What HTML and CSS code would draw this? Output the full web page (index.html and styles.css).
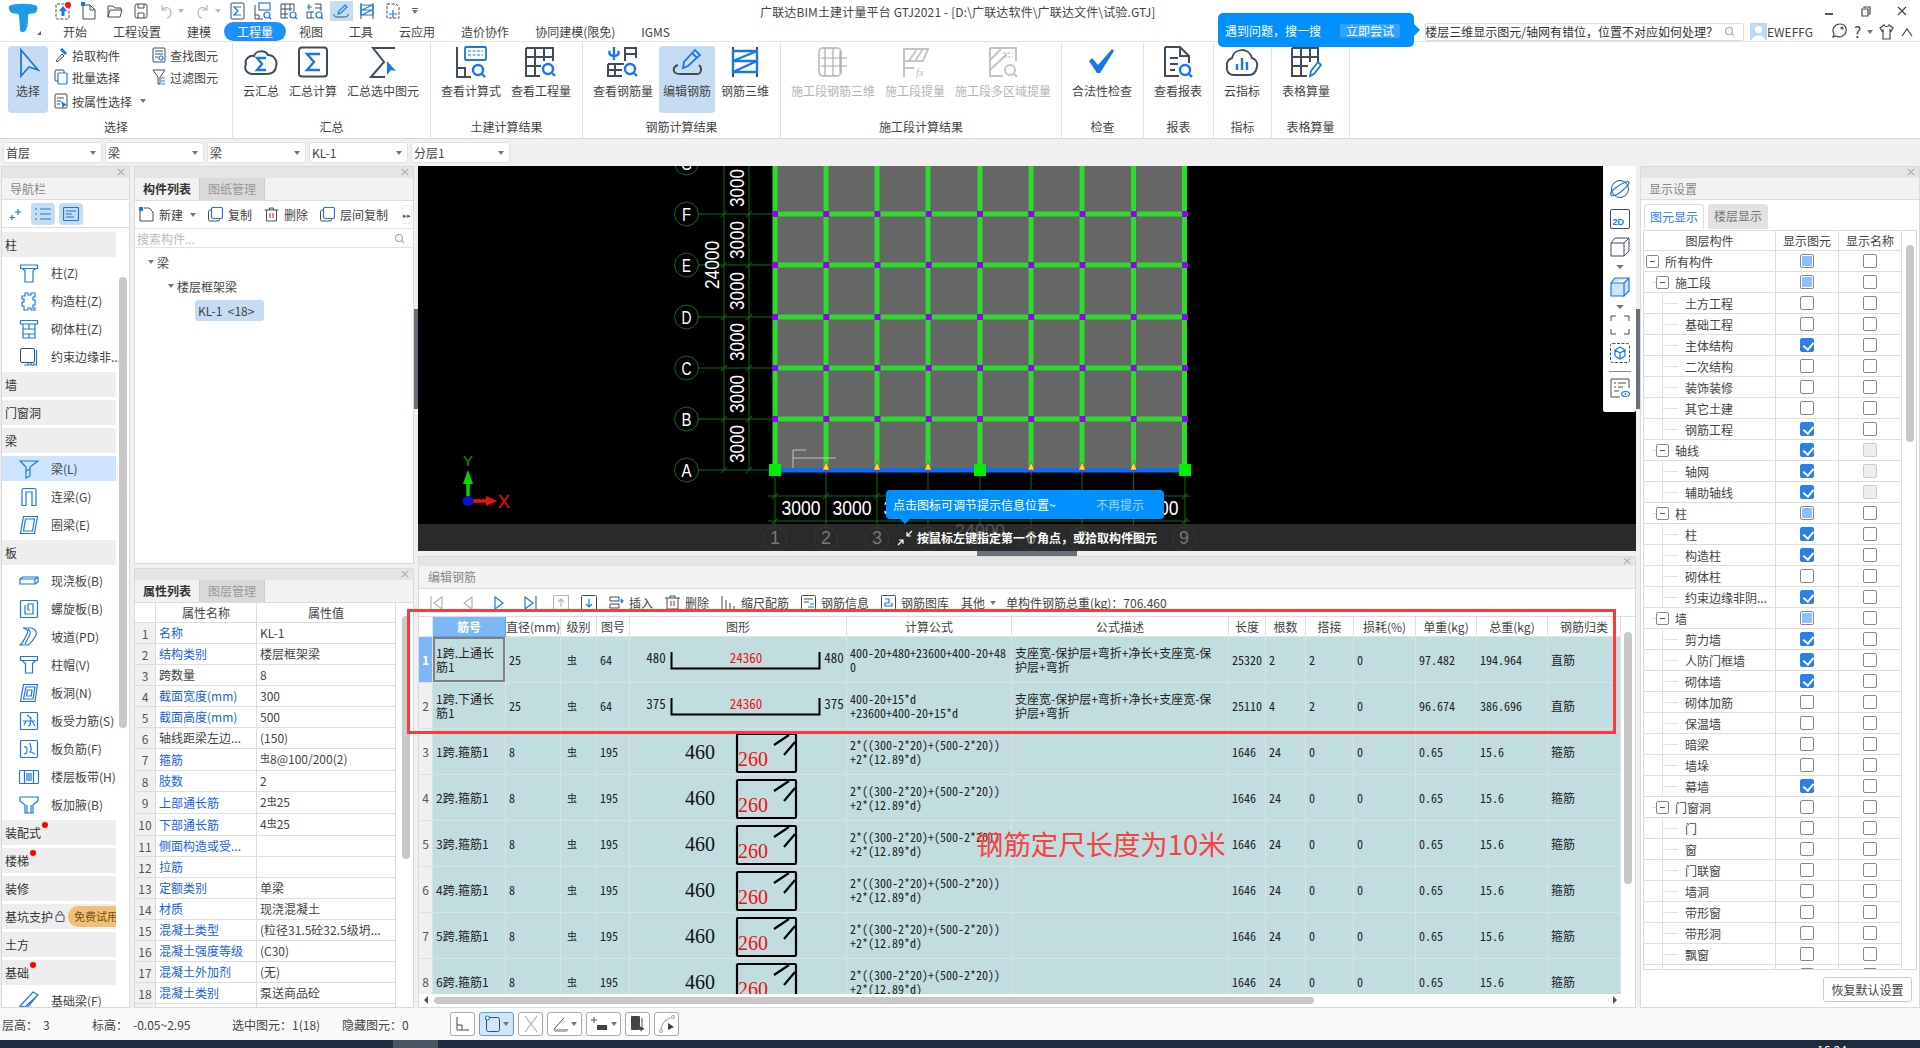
FILE: index.html
```html
<!DOCTYPE html>
<html lang="zh-CN">
<head>
<meta charset="utf-8">
<title>广联达BIM土建计量平台 GTJ2021</title>
<link rel="stylesheet" href="styles.css">
</head>
<body>
<svg class="defs" xmlns="http://www.w3.org/2000/svg">
  <symbol id="close" viewBox="0 0 10 10"><path d="M1 1l8 8M9 1l-8 8" class="sx"/></symbol>
  <symbol id="n1" viewBox="0 0 20 20"><path class="sb1" d="M1.5 2h17v3.5h-17zM3 5.5l3 2V19h8V7.5l3-2"/></symbol>
  <symbol id="n2" viewBox="0 0 20 20"><path class="sb1" d="M6 2h3v2h3V2h4v4h-2v3h2v5h-2v3h2v2h-4v-2H9v2H5v-4H3v-4h2V8H3V5h3z"/></symbol>
  <symbol id="n3" viewBox="0 0 20 20"><path class="sb1" d="M1.5 1.500h17v3.500h-17zM4 5h12v14H4zM4 10h12M4 15h12M10 5v5M10 15v4"/></symbol>
  <symbol id="n4" viewBox="0 0 20 20"><rect class="sd1" x="1.500" y="1.500" width="14" height="14" rx="1.500"/><path class="sb1" d="M17.500 3v15H5M15 18v-2M12 18v-2M9 18v-2"/></symbol>
  <symbol id="n5" viewBox="0 0 20 20"><path class="sb1" d="M1 2h18l-8 6v9l-4 2V8zM1 2l6 6M7 12l4-2"/></symbol>
  <symbol id="n6" viewBox="0 0 20 20"><path class="sb1" d="M3 18.500V3a1.500 1.500 0 0 1 1.500-1.500h11A1.500 1.500 0 0 1 17 3v15.500h-4V5H7v13.500z"/></symbol>
  <symbol id="n7" viewBox="0 0 20 20"><path class="sb1" d="M4.500 1.500h14l-3 17h-14zM6.500 4h9l-2 12h-9z"/></symbol>
  <symbol id="n8" viewBox="0 0 20 20"><path class="sb1" d="M1 8l3-2h15v5l-3 2H1zM1 8h15v5M16 8l3-2"/></symbol>
  <symbol id="n9" viewBox="0 0 20 20"><rect class="sb1" x="1.500" y="1.500" width="17" height="17" rx="1"/><path class="sb1" d="M6 6v9h8V5h-5v6h2"/></symbol>
  <symbol id="n10" viewBox="0 0 20 20"><path class="sb1" d="M4 1c5 1 6 3 3 8-2 4-3 7-6 9h8c3-2 6-6 8-10 1-3 0-5-4-7zM9 2c3 2 3 5 0 9l-3 6"/></symbol>
  <symbol id="n11" viewBox="0 0 20 20"><path class="sb1" d="M1.500 1.500h17v4h-17zM3 5.500l3.500 3V18h7V8.500l3.500-3"/></symbol>
  <symbol id="n12" viewBox="0 0 20 20"><path class="sb1" d="M4.500 1.500h14l-2.500 17H1.500zM7 4h9l-2 12H4.500zM8.500 7h4.500l-.7 6H7.500z"/></symbol>
  <symbol id="n13" viewBox="0 0 20 20"><rect class="sb1" x="1.500" y="1.500" width="17" height="17" rx="1"/><path class="sb1" d="M4 10h12M8 4l4 3-1 7-2 1M13 10l3 5M7 10l-2 4"/></symbol>
  <symbol id="n14" viewBox="0 0 20 20"><rect class="sb1" x="1.500" y="1.500" width="17" height="17" rx="1"/><path class="sb1" d="M5 8c2-1 3 1 3 3 0 3-1 4-3 4M11 4c0 3 3 6 0 9 2 0 3 1 5 2"/></symbol>
  <symbol id="n15" viewBox="0 0 20 20"><rect class="sb1" x=".5" y="3.500" width="19" height="13" rx="1"/><path class="sb1" d="M5.500 3.500v13M14.500 3.500v13M8 6v8M10 6v8M12 6v8"/></symbol>
  <symbol id="n16" viewBox="0 0 20 20"><path class="sb1" d="M1 2h18v4l-5 4v8H6v-8L1 6zM6 10L1 6M14 10l5-4M8 10v8M12 10v8"/></symbol>
  <symbol id="n17" viewBox="0 0 20 20"><path class="sb1" d="M14 1l5 3L6 19H1v-4zM1 15l5 1 13-12M6 16v3"/></symbol>
  <symbol id="ind" viewBox="0 0 15 15"><rect class="sd1" x=".5" y="3" width="11" height="11" rx="1.500"/><rect class="sb1 bgw" x="3.500" y=".5" width="11" height="11" rx="1.500"/></symbol>
  <symbol id="hoop" viewBox="0 0 216 45"><rect class="hoop" x="107" y="5" width="59" height="38" rx="1"/><path class="hoop" d="M144 16l15-10M154 26l11-13"/></symbol>
</svg>

<div class="app">
  <header class="head">
    <div class="logo">
      <svg width="32" height="32" viewBox="0 0 32 32"><path class="logo-t" d="M2 4C8 1 24 1 30 4c1 3 0 6-2 7-3 1-6 0-7 2 0 6 0 11-2 15-2 3-6 3-6-1l-1-14c-1-2-4-1-7-2C3 10 1 7 2 4z"/></svg>
      <i class="mini-tri"></i>
    </div>
    <div class="head-main">
      <div class="titlebar">
        <div class="qa">
          <span class="q"><svg width="16" height="18" viewBox="0 0 16 18"><rect class="sd1 dash" x="1" y="2" width="13" height="15" rx="1"/><path class="fb" d="M8 4l4 5H9.500v5h-3V9H4z"/><circle class="fr" cx="13" cy="3" r="3"/></svg></span>
          <span class="q"><svg width="16" height="18" viewBox="0 0 16 18"><path class="sd1" d="M2 3h7l5 5v9H2zM9 3v5h5"/><rect class="fb" x="0" y="0" width="4" height="4"/></svg></span>
          <span class="q"><svg width="16" height="18" viewBox="0 0 16 18"><path class="sd1" d="M1 15V4h5l2 2h6v2M1 15l2-7h12l-2 7z"/></svg></span>
          <span class="q"><svg width="16" height="18" viewBox="0 0 16 18"><rect class="sd1" x="2" y="2" width="12" height="14" rx="2"/><path class="sd1" d="M5 2v4h6V2M5 16v-5h6v5"/></svg></span>
          <span class="q undo"><svg width="14" height="16" viewBox="0 0 14 16"><path class="sg1" d="M3 2v5h5M3 7c3-4 9-3 9 3 0 3-2 5-4 5"/></svg><i class="caret lt"></i></span>
          <span class="q redo"><svg width="14" height="16" viewBox="0 0 14 16"><path class="sg1" d="M11 2v5H6M11 7C8 3 2 4 2 10c0 3 2 5 4 5"/></svg><i class="caret lt"></i></span>
          <span class="q"><svg width="15" height="18" viewBox="0 0 15 18"><rect class="sd1" x="1" y="1" width="13" height="16" rx="1"/><path class="sb1" d="M11 5H4l4 4-4 4h7"/></svg></span>
          <span class="q"><svg width="18" height="18" viewBox="0 0 18 18"><path class="sd1" d="M1 3v14h8M1 13h4v4"/><rect class="sb1" x="5" y="1" width="11" height="7"/><circle class="sb1" cx="13" cy="13" r="3"/><path class="sb1" d="M15 15l2 2"/></svg></span>
          <span class="q"><svg width="18" height="18" viewBox="0 0 18 18"><path class="sd1" d="M1 2h13v7M1 2v14h7M5 2v14M1 7h11M1 12h7M10 2v7"/><circle class="sb1" cx="13" cy="13" r="3"/><path class="sb1" d="M15 15l2 2"/></svg></span>
          <span class="q"><svg width="18" height="18" viewBox="0 0 18 18"><path class="sd1" d="M9 2h6v7M9 6h6M1 10h7M1 10v6h7M5 10v6"/><path class="sb1" d="M3 2v6M1 5h5"/><circle class="sb1" cx="13" cy="13" r="3"/><path class="sb1" d="M15 15l2 2"/></svg></span>
          <span class="q q-on"><svg width="16" height="16" viewBox="0 0 16 16"><path class="sd1" d="M1 11c0 3 1 3 7 3s7 0 7-3"/><path class="sb1" d="M5 11l1-3 6-6 2 2-6 6z"/></svg></span>
          <span class="q"><svg width="16" height="18" viewBox="0 0 16 18"><path class="sd1" d="M2 1v16M14 1v16"/><path class="sb1" d="M2 3h12v5H2zM2 8h12v5H2zM3 8l10-5M3 13l10-5"/></svg></span>
          <span class="q"><svg width="16" height="18" viewBox="0 0 16 18"><path class="sd1 dash" d="M2 2h9l3 3v11H2z"/><path class="sb1" d="M8 8v8M4 12h8"/></svg></span>
          <span class="q q-c"><i class="bar"></i><i class="caret"></i></span>
        </div>
        <div class="title">广联达BIM土建计量平台 GTJ2021 - [D:\广联达软件\广联达文件\试验.GTJ]</div>
        <div class="win">
          <i class="w-min"></i>
          <svg width="10" height="11" viewBox="0 0 10 11"><path class="sd2" d="M3 2V1h6v7H8M1 3h6v7H1z"/></svg>
          <svg width="10" height="10" viewBox="0 0 10 10"><path class="sd2" d="M1 1l8 8M9 1l-8 8"/></svg>
        </div>
      </div>
      <div class="tabrow">
        <nav class="tabs">
          <a class="tab">开始</a><a class="tab">工程设置</a><a class="tab">建模</a><a class="tab tab-on">工程量</a><a class="tab">视图</a><a class="tab">工具</a><a class="tab">云应用</a><a class="tab">造价协作</a><a class="tab">协同建模(限免)</a><a class="tab">IGMS</a>
        </nav>
        <div class="searchbox">
          <span class="q-wrap"><span class="q-text">楼层三维显示图元/轴网有错位，位置不对应如何处理？</span></span>
          <svg width="11" height="11" viewBox="0 0 11 11"><circle class="sg2" cx="5" cy="5" r="3.500"/><path class="sg2" d="M8 8l2 2"/></svg>
        </div>
        <div class="user">
          <svg width="17" height="17" viewBox="0 0 17 17"><rect class="av" width="17" height="17"/><circle class="fw" cx="8.500" cy="6.500" r="3.500"/><path class="fw" d="M2 17c0-6 13-6 13 0z"/></svg>
          <span>EWEFFG</span>
        </div>
        <div class="help">
          <svg width="17" height="17" viewBox="0 0 17 17"><path class="sd2" d="M2 14l1-3C0 6 4 1 9 1c5 0 7 4 6 8-1 4-6 6-10 4z"/><circle class="sd2" cx="11" cy="5" r="1"/></svg>
          <span class="qm">?</span><i class="caret"></i>
          <svg width="15" height="16" viewBox="0 0 15 16"><path class="sd2" d="M5 1L1 4l2 3 1-1v9h7V6l1 1 2-3-4-3c-1 2-4 2-5 0z"/></svg>
          <svg width="14" height="10" viewBox="0 0 14 10"><path class="sd2" d="M2 9l5-7 5 7"/></svg>
        </div>
      </div>
    </div>
  </header>

  <section class="ribbon">
    <div class="grp g1">
      <div class="grp-body">
        <button class="big big-sel on">
          <svg width="32" height="32" viewBox="0 0 32 32"><path class="sb2 fbl" d="M9 4l17 20-9-3-8 9z"/></svg>
          <span>选择</span>
        </button>
        <div class="col-small c1">
          <div class="sm"><svg width="14" height="16" viewBox="0 0 14 16"><path class="sd1" d="M2 14l6-7 2 2-7 6zM8 3l3 3"/><path class="fb" d="M8 1l5 5-2 2-5-5z"/></svg>拾取构件</div>
          <div class="sm"><svg width="14" height="16" viewBox="0 0 14 16"><rect class="sd1" x="1" y="1" width="9" height="11" rx="1"/><rect class="sb1 bgw" x="4" y="4" width="9" height="11" rx="1"/></svg>批量选择</div>
          <div class="sm"><svg width="14" height="16" viewBox="0 0 14 16"><rect class="sd1" x="1" y="1" width="12" height="14" rx="1"/><path class="sd1" d="M3 5h7M3 8h4M3 11h3"/><path class="fb" d="M7 8l6 4-3 1-1 3z"/></svg>按属性选择<i class="caret"></i></div>
        </div>
        <div class="col-small c2">
          <div class="sm"><svg width="14" height="16" viewBox="0 0 14 16"><rect class="sd1" x="1" y="1" width="12" height="14" rx="1"/><path class="sd1" d="M3 4h8M3 7h8M3 10h3"/><circle class="sb1" cx="9" cy="11" r="2"/></svg>查找图元</div>
          <div class="sm"><svg width="14" height="16" viewBox="0 0 14 16"><path class="sd1" d="M1 1h12L8 8v7H6V8z"/><path class="sb1" d="M9 9h4M9 12h4M9 15h4"/></svg>过滤图元</div>
        </div>
      </div>
      <div class="grp-name">选择</div>
    </div>
    <div class="grp g2">
      <div class="grp-body btns">
        <button class="big"><svg width="36" height="32" viewBox="0 0 36 32"><path class="sd3" d="M10 28C3 28 1 22 3 18c-2-5 4-9 8-8 2-6 11-6 14-1 6 0 10 6 8 12-1 5-5 7-9 7z"/><path class="sb3" d="M23 12h-9l5 6-5 6h9"/></svg><span>云汇总</span></button>
        <button class="big"><svg width="32" height="32" viewBox="0 0 32 32"><rect class="sd3" x="2" y="1.500" width="28" height="29" rx="3"/><path class="sb3" d="M23 8H10l7 8-7 8h13"/></svg><span>汇总计算</span></button>
        <button class="big"><svg width="32" height="32" viewBox="0 0 32 32"><path class="sd3" d="M28 2H6l11 14L4 31h14"/><path class="fb" d="M20 15l9 10-5-1-4 5z"/></svg><span>汇总选中图元</span></button>
      </div>
      <div class="grp-name">汇总</div>
    </div>
    <div class="grp g3">
      <div class="grp-body btns">
        <button class="big"><svg width="34" height="32" viewBox="0 0 34 32"><path class="sd3" d="M3 1v30h14M3 22h8v9"/><rect class="sb2 bgw" x="11" y="1" width="21" height="13" rx="1"/><path class="sb1 dash" d="M14 5h15M14 9h15"/><circle class="sb3" cx="24" cy="24" r="5"/><path class="sb3" d="M28 28l3 3"/></svg><span>查看计算式</span></button>
        <button class="big"><svg width="34" height="32" viewBox="0 0 34 32"><path class="sd3" d="M2 2h27v13M2 2v28h14M2 11h26M2 20h15M11 2v28M20 2v13"/><circle class="sb3" cx="24" cy="23" r="5"/><path class="sb3" d="M28 27l3 3"/></svg><span>查看工程量</span></button>
      </div>
      <div class="grp-name">土建计算结果</div>
    </div>
    <div class="grp g4">
      <div class="grp-body btns">
        <button class="big"><svg width="34" height="32" viewBox="0 0 34 32"><path class="sd3" d="M19 15V2h11v10M19 8h11M2 18h16M2 18v12h14M9 18v12M2 24h14"/><path class="sb3" d="M8 1v13M4 5c-2 3 1 5 4 5s6-2 4-5"/><circle class="sb3" cx="24" cy="23" r="5"/><path class="sb3" d="M28 27l3 3"/></svg><span>查看钢筋量</span></button>
        <button class="big big-on on"><svg width="32" height="32" viewBox="0 0 32 32"><path class="sd3" d="M7 19c-6 2-6 9 2 9h17c5 0 5-7 2-9"/><path class="sb2" d="M12 22l1-6L24 4l5 5-12 11zM21 7l5 5"/></svg><span>编辑钢筋</span></button>
        <button class="big"><svg width="32" height="32" viewBox="0 0 32 32"><path class="sd3" d="M4 1v30M28 1v30"/><path class="sb3" d="M4 5h24v10H4zM4 15h24v11H4zM4 15L28 5M4 26l24-11"/></svg><span>钢筋三维</span></button>
      </div>
      <div class="grp-name">钢筋计算结果</div>
    </div>
    <div class="grp g5">
      <div class="grp-body btns off">
        <button class="big"><svg width="32" height="32" viewBox="0 0 32 32"><rect class="sg3" x="2" y="2" width="22" height="28" rx="4"/><path class="sg2" d="M8 2v28M4 12h26M4 20h26M16 2v28M23 5v22"/></svg><span>施工段钢筋三维</span></button>
        <button class="big"><svg width="32" height="32" viewBox="0 0 32 32"><path class="sg3" d="M5 3h24l-5 12H5zM5 3v28M5 22h10M10 15l8-12M16 15l8-12"/><text class="fx" x="17" y="30">fx</text></svg><span>施工段提量</span></button>
        <button class="big"><svg width="32" height="32" viewBox="0 0 32 32"><path class="sg3" d="M3 2h26v13M3 2v28h13M3 14L14 3M3 24L20 8"/><path class="sg1 dash" d="M16 7h10M16 11h10"/><circle class="sg3" cx="23" cy="24" r="5"/><path class="sg3" d="M27 28l3 3"/></svg><span>施工段多区域提量</span></button>
      </div>
      <div class="grp-name">施工段计算结果</div>
    </div>
    <div class="grp g6">
      <div class="grp-body btns">
        <button class="big"><svg width="32" height="32" viewBox="0 0 32 32"><path class="fb" d="M3 15l3-3 6 7L26 3l2 2-14 22h-3z"/></svg><span>合法性检查</span></button>
      </div>
      <div class="grp-name">检查</div>
    </div>
    <div class="grp g7">
      <div class="grp-body btns">
        <button class="big"><svg width="32" height="32" viewBox="0 0 32 32"><path class="sd3" d="M3 1h15l9 9v7M18 1v9h9M3 1v29h14M8 12h8M8 18h8M8 24h5"/><circle class="sb3" cx="23" cy="24" r="5"/><path class="sb3" d="M27 28l3 3"/></svg><span>查看报表</span></button>
      </div>
      <div class="grp-name">报表</div>
    </div>
    <div class="grp g8">
      <div class="grp-body btns">
        <button class="big"><svg width="34" height="32" viewBox="0 0 34 32"><path class="sd3" d="M9 29C3 29 1 24 2 20c-1-4 2-7 5-8C9 2 24 1 27 12c4 1 6 5 5 9-1 5-4 8-8 8z"/><path class="sb3" d="M12 18v6M17 12v12M22 16v8"/></svg><span>云指标</span></button>
      </div>
      <div class="grp-name">指标</div>
    </div>
    <div class="grp g9">
      <div class="grp-body btns">
        <button class="big"><svg width="32" height="32" viewBox="0 0 32 32"><path class="sd3" d="M2 2h26v15M2 2v28h15M2 11h26M2 20h16M11 2v28M20 2v14"/><path class="sb2" d="M20 30l1-5 7-9 3 3-7 9z"/></svg><span>表格算量</span></button>
      </div>
      <div class="grp-name">表格算量</div>
    </div>
  </section>

  <div class="combos">
    <div class="combo">首层<i class="caret"></i></div>
    <div class="combo">梁<i class="caret"></i></div>
    <div class="combo">梁<i class="caret"></i></div>
    <div class="combo">KL-1<i class="caret"></i></div>
    <div class="combo">分层1<i class="caret"></i></div>
  </div>

  <main class="main">
    <aside class="panel nav">
      <div class="p-head"><svg class="p-x"><use href="#close"/></svg></div>
      <div class="p-title">导航栏</div>
      <div class="nav-tools">
        <svg class="spark" width="14" height="14" viewBox="0 0 14 14"><path class="sb1" d="M9 2v6M6 5h6M3 8v5M1 10.500h5"/></svg>
        <span class="nt on"><svg width="16" height="14" viewBox="0 0 16 14"><path class="sb1" d="M5 2h11M5 7h11M5 12h11M0 2h2M0 7h2M0 12h2"/></svg></span>
        <span class="nt on"><svg width="16" height="14" viewBox="0 0 16 14"><rect class="sb1" x=".5" y=".5" width="15" height="13" rx="1"/><path class="sb1" d="M3 4h10M3 7h6M3 10h8"/></svg></span>
      </div>
      <div class="nav-list">
        <div class="cat">柱</div>
        <div class="it"><svg><use href="#n1"/></svg>柱(Z)</div>
        <div class="it"><svg><use href="#n2"/></svg>构造柱(Z)</div>
        <div class="it"><svg><use href="#n3"/></svg>砌体柱(Z)</div>
        <div class="it"><svg><use href="#n4"/></svg>约束边缘非...</div>
        <div class="cat">墙</div>
        <div class="cat">门窗洞</div>
        <div class="cat">梁</div>
        <div class="it it-on"><svg><use href="#n5"/></svg>梁(L)</div>
        <div class="it"><svg><use href="#n6"/></svg>连梁(G)</div>
        <div class="it"><svg><use href="#n7"/></svg>圈梁(E)</div>
        <div class="cat">板</div>
        <div class="it"><svg><use href="#n8"/></svg>现浇板(B)</div>
        <div class="it"><svg><use href="#n9"/></svg>螺旋板(B)</div>
        <div class="it"><svg><use href="#n10"/></svg>坡道(PD)</div>
        <div class="it"><svg><use href="#n11"/></svg>柱帽(V)</div>
        <div class="it"><svg><use href="#n12"/></svg>板洞(N)</div>
        <div class="it"><svg><use href="#n13"/></svg>板受力筋(S)</div>
        <div class="it"><svg><use href="#n14"/></svg>板负筋(F)</div>
        <div class="it"><svg><use href="#n15"/></svg>楼层板带(H)</div>
        <div class="it"><svg><use href="#n16"/></svg>板加腋(B)</div>
        <div class="cat">装配式<i class="dot"></i></div>
        <div class="cat">楼梯<i class="dot"></i></div>
        <div class="cat">装修</div>
        <div class="cat cat-try">基坑支护<svg width="10" height="11" viewBox="0 0 10 11"><rect class="sd1" x="1" y="4" width="8" height="6.500" rx="1"/><path class="sd1" d="M3 4V2.500a2 2 0 0 1 4 0V4"/></svg><span class="free">免费试用</span></div>
        <div class="cat">土方</div>
        <div class="cat">基础<i class="dot"></i></div>
        <div class="it"><svg><use href="#n17"/></svg>基础梁(F)</div>
      </div>
      <i class="v-scroll nav-scroll"></i>
    </aside>

    <div class="col-mid">
      <section class="panel comp">
        <div class="p-head"><svg class="p-x"><use href="#close"/></svg></div>
        <div class="p-tabs"><span class="pt pt-on">构件列表</span><span class="pt">图纸管理</span></div>
        <div class="comp-tools">
          <span class="ct"><svg width="15" height="15" viewBox="0 0 15 15"><path class="sd1" d="M1 4v10h13V5l-4-4H5"/><rect class="fb" width="4" height="4"/></svg>新建<i class="caret"></i></span>
          <span class="ct"><svg><use href="#ind"/></svg>复制</span>
          <span class="ct"><svg width="14" height="15" viewBox="0 0 14 15"><path class="sd1" d="M0 3h14M2 3v11h10V3M5 3V1h4v2"/><path class="sr" d="M5.500 6v5M8.500 6v5"/></svg>删除</span>
          <span class="ct"><svg><use href="#ind"/></svg>层间复制</span>
          <span class="more">▸▸</span>
        </div>
        <div class="comp-search"><span>搜索构件...</span><svg width="11" height="11" viewBox="0 0 11 11"><circle class="sg2" cx="5" cy="5" r="3.500"/><path class="sg2" d="M8 8l2 2"/></svg></div>
        <div class="tree">
          <div class="tr t1"><i class="tri"></i>梁</div>
          <div class="tr t2"><i class="tri"></i>楼层框架梁</div>
          <div class="tr t3"><span class="leaf">KL-1 &nbsp;&lt;18&gt;</span></div>
        </div>
      </section>
      <section class="panel props">
        <div class="p-head"><svg class="p-x"><use href="#close"/></svg></div>
        <div class="p-tabs"><span class="pt pt-on">属性列表</span><span class="pt">图层管理</span></div>
        <div class="prop-body">
          <table class="ptable">
            <colgroup><col class="pc1"><col class="pc2"><col class="pc3"></colgroup>
            <thead><tr><th></th><th>属性名称</th><th>属性值</th></tr></thead>
            <tbody>
              <tr><th>1</th><td class="lnk">名称</td><td>KL-1</td></tr>
              <tr><th>2</th><td class="lnk">结构类别</td><td>楼层框架梁</td></tr>
              <tr><th>3</th><td>跨数量</td><td>8</td></tr>
              <tr><th>4</th><td class="lnk">截面宽度(mm)</td><td>300</td></tr>
              <tr><th>5</th><td class="lnk">截面高度(mm)</td><td>500</td></tr>
              <tr><th>6</th><td>轴线距梁左边...</td><td>(150)</td></tr>
              <tr><th>7</th><td class="lnk">箍筋</td><td><b class="rb">虫</b>8@100/200(2)</td></tr>
              <tr><th>8</th><td class="lnk">肢数</td><td>2</td></tr>
              <tr><th>9</th><td class="lnk">上部通长筋</td><td>2<b class="rb">虫</b>25</td></tr>
              <tr><th>10</th><td class="lnk">下部通长筋</td><td>4<b class="rb">虫</b>25</td></tr>
              <tr><th>11</th><td class="lnk">侧面构造或受...</td><td></td></tr>
              <tr><th>12</th><td class="lnk">拉筋</td><td></td></tr>
              <tr><th>13</th><td class="lnk">定额类别</td><td>单梁</td></tr>
              <tr><th>14</th><td class="lnk">材质</td><td>现浇混凝土</td></tr>
              <tr><th>15</th><td class="lnk">混凝土类型</td><td>(粒径31.5砼32.5级坍...</td></tr>
              <tr><th>16</th><td class="lnk">混凝土强度等级</td><td>(C30)</td></tr>
              <tr><th>17</th><td class="lnk">混凝土外加剂</td><td>(无)</td></tr>
              <tr><th>18</th><td class="lnk">混凝土类别</td><td>泵送商品砼</td></tr>
              <tr><th>19</th><td class="lnk">泵送类型</td><td>(混凝土泵)</td></tr>
            </tbody>
          </table>
          <i class="v-scroll prop-scroll"></i>
        </div>
      </section>
    </div>

    <div class="gutter"><i class="handle-v"></i></div>

    <div class="col-view">
      <section class="canvas">
        <svg class="cad" width="1218" height="385" viewBox="418 166 1218 385">
          <defs>
            <polygon id="bub" points="12,0 10.400,6 6,10.400 0,12 -6,10.400 -10.400,6 -12,0 -10.400,-6 -6,-10.400 0,-12 6,-10.400 10.400,-6"/>
          </defs>
          <rect class="c-fill" x="775" y="166" width="410" height="304"/>
          <g class="c-dim">
            <path d="M698 214H775M698 265H775M698 317H775M698 368H775M698 419H775M698 470H775M724 166V470M749 166V470"/>
            <path d="M775 470V546M826 470V546M877 470V546M928 470V546M980 470V546M1031 470V546M1082 470V546M1133.500 470V546M1185 470V546M768 496H1190M768 521H1190"/>
            <path d="M721 217l6-6M746 217l6-6M721 268l6-6M746 268l6-6M721 320l6-6M746 320l6-6M721 371l6-6M746 371l6-6M721 422l6-6M746 422l6-6M721 473l6-6M746 473l6-6M772 499l6-6M823 499l6-6M874 499l6-6M1182 499l6-6M772 524l6-6M1182 524l6-6"/>
            <use href="#bub" x="686.500" y="163"/><use href="#bub" x="686.500" y="214"/><use href="#bub" x="686.500" y="265"/><use href="#bub" x="686.500" y="317"/><use href="#bub" x="686.500" y="368"/><use href="#bub" x="686.500" y="419"/><use href="#bub" x="686.500" y="470"/>
          </g>
          <g class="c-beam">
            <path d="M775 166V470M826 166V470M877 166V470M928 166V470M980 166V470M1031 166V470M1082 166V470M1133.500 166V470M1184.500 166V470"/>
            <path d="M775 214H1185M775 265H1185M775 317H1185M775 368H1185M775 419H1185"/>
          </g>
          <g class="c-node">
            <path d="M772 214H1190M772 265H1190M772 317H1190M772 368H1190M772 419H1190"/>
          </g>
          <rect class="c-sel" x="775" y="468" width="410" height="4.500"/>
          <path class="c-node2" d="M826 472.500v2M877 472.500v2M928 472.500v2M1031 472.500v2M1082 472.500v2M1133.500 472.500v2"/>
          <path class="c-tri" d="M826 462l3.500 8h-7zM877 462l3.500 8h-7zM928 462l3.500 8h-7zM1031 462l3.500 8h-7zM1082 462l3.500 8h-7zM1133.500 462l3.500 8h-7z"/>
          <rect class="c-grip" x="769" y="464" width="12" height="12"/><rect class="c-grip" x="974" y="464" width="12" height="12"/><rect class="c-grip" x="1179" y="464" width="12" height="12"/>
          <path class="c-tick" d="M793 450V468M793 450H806M793 458H836"/>
          <g class="c-txt c-ax">
            <text x="686.500" y="170" textLength="11" lengthAdjust="spacingAndGlyphs">G</text><text x="686.500" y="221" textLength="9" lengthAdjust="spacingAndGlyphs">F</text><text x="686.500" y="272" textLength="9" lengthAdjust="spacingAndGlyphs">E</text><text x="686.500" y="324" textLength="10" lengthAdjust="spacingAndGlyphs">D</text><text x="686.500" y="375" textLength="10" lengthAdjust="spacingAndGlyphs">C</text><text x="686.500" y="426" textLength="10" lengthAdjust="spacingAndGlyphs">B</text><text x="686.500" y="477" textLength="10" lengthAdjust="spacingAndGlyphs">A</text>
          </g>
          <g class="c-txt">
            <text class="dim" transform="translate(744,188) rotate(-90)" textLength="38" lengthAdjust="spacingAndGlyphs">3000</text>
            <text class="dim" transform="translate(744,240) rotate(-90)" textLength="38" lengthAdjust="spacingAndGlyphs">3000</text>
            <text class="dim" transform="translate(744,291) rotate(-90)" textLength="38" lengthAdjust="spacingAndGlyphs">3000</text>
            <text class="dim" transform="translate(744,342) rotate(-90)" textLength="38" lengthAdjust="spacingAndGlyphs">3000</text>
            <text class="dim" transform="translate(744,394) rotate(-90)" textLength="38" lengthAdjust="spacingAndGlyphs">3000</text>
            <text class="dim" transform="translate(744,444) rotate(-90)" textLength="38" lengthAdjust="spacingAndGlyphs">3000</text>
            <text class="dim" transform="translate(719,265) rotate(-90)" textLength="48" lengthAdjust="spacingAndGlyphs">24000</text>
            <text class="dim" x="801" y="515" textLength="39" lengthAdjust="spacingAndGlyphs">3000</text>
            <text class="dim" x="852" y="515" textLength="39" lengthAdjust="spacingAndGlyphs">3000</text>
            <text class="dim" x="903" y="515" textLength="39" lengthAdjust="spacingAndGlyphs">3000</text>
            <text class="dim" x="1159" y="515" textLength="39" lengthAdjust="spacingAndGlyphs">3000</text>
          </g>
          <g class="c-xyz">
            <path class="y-ax" d="M468 498V484"/><path class="y-tip" d="M468 470l5 14h-10z"/>
            <path class="x-ax" d="M472 501h14"/><path class="x-tip" d="M497 501l-11 5v-10z"/>
            <ellipse class="o-dot" cx="468" cy="501" rx="5.500" ry="5"/>
            <text class="t-y" x="468" y="466">Y</text><text class="t-x" x="504" y="508">X</text>
          </g>
          <g class="c-under">
            <use href="#bub" x="775" y="539"/><use href="#bub" x="826" y="539"/><use href="#bub" x="877" y="539"/><use href="#bub" x="928" y="539"/><use href="#bub" x="980" y="539"/><use href="#bub" x="1031" y="539"/><use href="#bub" x="1082" y="539"/><use href="#bub" x="1133.500" y="539"/><use href="#bub" x="1184.500" y="539"/>
          </g>
        </svg>
        <div class="band">
          <div class="band-nums"><span>1</span><span>2</span><span>3</span><span>4</span><span>5</span><span>6</span><span>7</span><span>8</span><span>9</span><span class="band-sum">24000</span></div>
          <svg class="band-ic" width="16" height="16" viewBox="0 0 16 16"><path class="sw" d="M15 1L10 6M10 2v4h4M1 15l5-5M6 14v-4H2"/></svg>
          <span class="band-text">按鼠标左键指定第一个角点，或拾取构件图元</span>
        </div>
        <div class="tip">
          <span>点击图标可调节提示信息位置~</span><span class="tip-no">不再提示</span>
        </div>
        <div class="floatbar">
          <svg width="22" height="22" viewBox="0 0 22 22"><circle class="sd1" cx="11" cy="11" r="8.500"/><path class="sb1" d="M2 17c-3-4 15-15 18-13 2 2-14 17-18 13z"/></svg>
          <svg width="20" height="20" viewBox="0 0 20 20"><rect class="sd1" x=".5" y=".5" width="19" height="19" rx="1.500"/><text class="t2d" x="2.500" y="16">2D</text></svg>
          <svg width="20" height="20" viewBox="0 0 20 20"><path class="sd1" d="M1 6h13v13H1zM1 6l4-5h14v13l-5 5M14 6l5-5"/></svg>
          <i class="caret"></i>
          <svg width="20" height="20" viewBox="0 0 20 20"><path class="sb1 fc" d="M1 6h13v13H1zM1 6l4-5h14v13l-5 5V6l5-5"/></svg>
          <i class="caret"></i>
          <svg width="20" height="20" viewBox="0 0 20 20"><path class="sd1" d="M1 6V1h5M14 1h5v5M19 14v5h-5M6 19H1v-5"/></svg>
          <svg width="20" height="20" viewBox="0 0 20 20"><rect class="sd1 dash" x=".5" y=".5" width="19" height="19" rx="2"/><path class="sb1" d="M10 4l5 3v6l-5 3-5-3V7zM5 7l5 3 5-3M10 10v6"/></svg>
          <i class="fb-sep"></i>
          <svg width="20" height="20" viewBox="0 0 20 20"><path class="sd1" d="M19 10V1H1v18h9M4 5h2M8 5h8M4 9h2M8 9h5M4 13h5"/><ellipse class="sb1" cx="15.500" cy="16" rx="4" ry="2.500"/><circle class="fb" cx="15.500" cy="16" r="1"/></svg>
        </div>
      </section>
      <div class="gutter-h"><i class="handle-h"></i></div>
      <section class="panel edit">
        <div class="p-head"><svg class="p-x"><use href="#close"/></svg></div>
        <div class="p-title edit-title">编辑钢筋</div>
        <div class="tools">
          <svg class="nv" viewBox="0 0 20 16"><path class="sg1" d="M6 1v14M17 2l-8 6 8 6z"/></svg>
          <svg class="nv" viewBox="0 0 20 16"><path class="sg1" d="M15 2L7 8l8 6z"/></svg>
          <svg class="nv" viewBox="0 0 20 16"><path class="sb1" d="M6 2l8 6-8 6z"/></svg>
          <svg class="nv" viewBox="0 0 20 16"><path class="sb1" d="M4 2l8 6-8 6zM15 1v14"/></svg>
          <svg class="nv2" viewBox="0 0 16 16"><rect class="sg1" x=".5" y=".5" width="15" height="15" rx="1"/><path class="sg1" d="M8 12V4M5 7l3-3 3 3"/></svg>
          <svg class="nv2" viewBox="0 0 16 16"><rect class="sd1" x=".5" y=".5" width="15" height="15" rx="1"/><path class="sb1" d="M8 4v8M5 9l3 3 3-3"/></svg>
          <span class="ti"><svg width="15" height="15" viewBox="0 0 15 15"><path class="sd1" d="M1 2h9v4H1zM1 9h9v4H1z"/><path class="sb1" d="M11 6h3M12 4l2 2-2 2"/></svg>插入</span>
          <span class="ti"><svg width="15" height="15" viewBox="0 0 15 15"><path class="sd1" d="M0 3h15M2 3v11h11V3M5 3V1h5v2"/><path class="sr" d="M6 6v5M9 6v5"/></svg>删除</span>
          <span class="ti"><svg width="15" height="15" viewBox="0 0 15 15"><path class="sd1" d="M1 1v13M5 5v9M9 8v6M13 11v3"/></svg>缩尺配筋</span>
          <span class="ti"><svg width="15" height="15" viewBox="0 0 15 15"><rect class="sd1" x=".5" y=".5" width="14" height="14" rx="1"/><path class="sd1" d="M3 4h9M3 7h5"/><path class="sb1" d="M9 9h4M7 12h6"/></svg>钢筋信息</span>
          <span class="ti"><svg width="15" height="15" viewBox="0 0 15 15"><rect class="sd1" x=".5" y=".5" width="14" height="14" rx="1"/><path class="sb1" d="M4 4h4v4H4M4 8v3h7V8"/></svg>钢筋图库</span>
          <span class="ti ti-o">其他<i class="caret"></i></span>
          <span class="ti-total">单构件钢筋总重(kg)：706.460</span>
        </div>
        <div class="grid-wrap">
          <table class="rtable">
            <colgroup><col class="r0"><col class="r1"><col class="r2"><col class="r3"><col class="r4"><col class="r5"><col class="r6"><col class="r7"><col class="r8"><col class="r9"><col class="r10"><col class="r11"><col class="r12"><col class="r13"><col class="r14"></colgroup>
            <thead><tr><th></th><th class="hsel">筋号</th><th>直径(mm)</th><th>级别</th><th>图号</th><th>图形</th><th>计算公式</th><th>公式描述</th><th>长度</th><th>根数</th><th>搭接</th><th>损耗(%)</th><th>单重(kg)</th><th>总重(kg)</th><th>钢筋归类</th></tr></thead>
            <tbody>
              <tr><th class="rsel">1</th><td class="cell-sel">1跨.上通长<br>筋1</td><td class="m">25</td><td class="ctr"><b class="rb2">虫</b></td><td class="m">64</td>
                <td class="sh"><svg class="shape" viewBox="0 0 216 45"><text class="tm" x="26" y="26">480</text><path class="bar-s" d="M41.500 15V31.500H189.500V15"/><text class="tr-m" x="116" y="26">24360</text><text class="tm" x="204" y="26">480</text></svg></td>
                <td class="m">400-20+480+23600+400-20+48<br>0</td><td class="cn">支座宽-保护层+弯折+净长+支座宽-保<br>护层+弯折</td><td class="m">25320</td><td class="m">2</td><td class="m">2</td><td class="m">0</td><td class="m">97.482</td><td class="m">194.964</td><td class="cn">直筋</td></tr>
              <tr><th>2</th><td>1跨.下通长<br>筋1</td><td class="m">25</td><td class="ctr"><b class="rb2">虫</b></td><td class="m">64</td>
                <td class="sh"><svg class="shape" viewBox="0 0 216 45"><text class="tm" x="26" y="26">375</text><path class="bar-s" d="M41.500 15V31.500H189.500V15"/><text class="tr-m" x="116" y="26">24360</text><text class="tm" x="204" y="26">375</text></svg></td>
                <td class="m">400-20+15*d<br>+23600+400-20+15*d</td><td class="cn">支座宽-保护层+弯折+净长+支座宽-保<br>护层+弯折</td><td class="m">25110</td><td class="m">4</td><td class="m">2</td><td class="m">0</td><td class="m">96.674</td><td class="m">386.696</td><td class="cn">直筋</td></tr>
              <tr><th>3</th><td>1跨.箍筋1</td><td class="m">8</td><td class="ctr"><b class="rb2">虫</b></td><td class="m">195</td>
                <td class="sh"><svg class="shape" viewBox="0 0 216 45"><text class="t460" x="70" y="30">460</text><use href="#hoop"/><text class="t260" x="108" y="37">260</text></svg></td>
                <td class="m">2*((300-2*20)+(500-2*20))<br>+2*(12.89*d)</td><td></td><td class="m">1646</td><td class="m">24</td><td class="m">0</td><td class="m">0</td><td class="m">0.65</td><td class="m">15.6</td><td class="cn">箍筋</td></tr>
              <tr><th>4</th><td>2跨.箍筋1</td><td class="m">8</td><td class="ctr"><b class="rb2">虫</b></td><td class="m">195</td>
                <td class="sh"><svg class="shape" viewBox="0 0 216 45"><text class="t460" x="70" y="30">460</text><use href="#hoop"/><text class="t260" x="108" y="37">260</text></svg></td>
                <td class="m">2*((300-2*20)+(500-2*20))<br>+2*(12.89*d)</td><td></td><td class="m">1646</td><td class="m">24</td><td class="m">0</td><td class="m">0</td><td class="m">0.65</td><td class="m">15.6</td><td class="cn">箍筋</td></tr>
              <tr><th>5</th><td>3跨.箍筋1</td><td class="m">8</td><td class="ctr"><b class="rb2">虫</b></td><td class="m">195</td>
                <td class="sh"><svg class="shape" viewBox="0 0 216 45"><text class="t460" x="70" y="30">460</text><use href="#hoop"/><text class="t260" x="108" y="37">260</text></svg></td>
                <td class="m">2*((300-2*20)+(500-2*20))<br>+2*(12.89*d)</td><td></td><td class="m">1646</td><td class="m">24</td><td class="m">0</td><td class="m">0</td><td class="m">0.65</td><td class="m">15.6</td><td class="cn">箍筋</td></tr>
              <tr><th>6</th><td>4跨.箍筋1</td><td class="m">8</td><td class="ctr"><b class="rb2">虫</b></td><td class="m">195</td>
                <td class="sh"><svg class="shape" viewBox="0 0 216 45"><text class="t460" x="70" y="30">460</text><use href="#hoop"/><text class="t260" x="108" y="37">260</text></svg></td>
                <td class="m">2*((300-2*20)+(500-2*20))<br>+2*(12.89*d)</td><td></td><td class="m">1646</td><td class="m">24</td><td class="m">0</td><td class="m">0</td><td class="m">0.65</td><td class="m">15.6</td><td class="cn">箍筋</td></tr>
              <tr><th>7</th><td>5跨.箍筋1</td><td class="m">8</td><td class="ctr"><b class="rb2">虫</b></td><td class="m">195</td>
                <td class="sh"><svg class="shape" viewBox="0 0 216 45"><text class="t460" x="70" y="30">460</text><use href="#hoop"/><text class="t260" x="108" y="37">260</text></svg></td>
                <td class="m">2*((300-2*20)+(500-2*20))<br>+2*(12.89*d)</td><td></td><td class="m">1646</td><td class="m">24</td><td class="m">0</td><td class="m">0</td><td class="m">0.65</td><td class="m">15.6</td><td class="cn">箍筋</td></tr>
              <tr><th>8</th><td>6跨.箍筋1</td><td class="m">8</td><td class="ctr"><b class="rb2">虫</b></td><td class="m">195</td>
                <td class="sh"><svg class="shape" viewBox="0 0 216 45"><text class="t460" x="70" y="30">460</text><use href="#hoop"/><text class="t260" x="108" y="37">260</text></svg></td>
                <td class="m">2*((300-2*20)+(500-2*20))<br>+2*(12.89*d)</td><td></td><td class="m">1646</td><td class="m">24</td><td class="m">0</td><td class="m">0</td><td class="m">0.65</td><td class="m">15.6</td><td class="cn">箍筋</td></tr>
            </tbody>
          </table>
          <i class="v-scroll edit-scroll"></i>
        </div>
        <div class="hscroll"><i class="tri-l"></i><i class="h-thumb"></i><i class="tri-r"></i></div>
      </section>
    </div>

    <div class="gutter"><i class="handle-v"></i></div>

    <aside class="panel disp">
      <div class="p-head"><svg class="p-x"><use href="#close"/></svg></div>
      <div class="p-title">显示设置</div>
      <div class="disp-tabs"><span class="dt dt-on">图元显示</span><span class="dt">楼层显示</span></div>
      <div class="disp-box">
        <table class="dtable">
          <colgroup><col class="d1"><col class="d2"><col class="d3"></colgroup>
          <thead><tr><th>图层构件</th><th>显示图元</th><th>显示名称</th></tr></thead>
          <tbody>
            <tr><td class="l0"><i class="ex"></i>所有构件</td><td><i class="ck in"></i></td><td><i class="ck"></i></td></tr>
            <tr><td class="l1"><i class="ex"></i>施工段</td><td><i class="ck in"></i></td><td><i class="ck"></i></td></tr>
            <tr><td class="l2">土方工程</td><td><i class="ck"></i></td><td><i class="ck"></i></td></tr>
            <tr><td class="l2">基础工程</td><td><i class="ck"></i></td><td><i class="ck"></i></td></tr>
            <tr><td class="l2">主体结构</td><td><i class="ck on"></i></td><td><i class="ck"></i></td></tr>
            <tr><td class="l2">二次结构</td><td><i class="ck"></i></td><td><i class="ck"></i></td></tr>
            <tr><td class="l2">装饰装修</td><td><i class="ck"></i></td><td><i class="ck"></i></td></tr>
            <tr><td class="l2">其它土建</td><td><i class="ck"></i></td><td><i class="ck"></i></td></tr>
            <tr><td class="l2">钢筋工程</td><td><i class="ck on"></i></td><td><i class="ck"></i></td></tr>
            <tr><td class="l1"><i class="ex"></i>轴线</td><td><i class="ck on"></i></td><td><i class="ck dis"></i></td></tr>
            <tr><td class="l2">轴网</td><td><i class="ck on"></i></td><td><i class="ck dis"></i></td></tr>
            <tr><td class="l2">辅助轴线</td><td><i class="ck on"></i></td><td><i class="ck dis"></i></td></tr>
            <tr><td class="l1"><i class="ex"></i>柱</td><td><i class="ck in"></i></td><td><i class="ck"></i></td></tr>
            <tr><td class="l2">柱</td><td><i class="ck on"></i></td><td><i class="ck"></i></td></tr>
            <tr><td class="l2">构造柱</td><td><i class="ck on"></i></td><td><i class="ck"></i></td></tr>
            <tr><td class="l2">砌体柱</td><td><i class="ck"></i></td><td><i class="ck"></i></td></tr>
            <tr><td class="l2">约束边缘非阴...</td><td><i class="ck on"></i></td><td><i class="ck"></i></td></tr>
            <tr><td class="l1"><i class="ex"></i>墙</td><td><i class="ck in"></i></td><td><i class="ck"></i></td></tr>
            <tr><td class="l2">剪力墙</td><td><i class="ck on"></i></td><td><i class="ck"></i></td></tr>
            <tr><td class="l2">人防门框墙</td><td><i class="ck on"></i></td><td><i class="ck"></i></td></tr>
            <tr><td class="l2">砌体墙</td><td><i class="ck on"></i></td><td><i class="ck"></i></td></tr>
            <tr><td class="l2">砌体加筋</td><td><i class="ck"></i></td><td><i class="ck"></i></td></tr>
            <tr><td class="l2">保温墙</td><td><i class="ck"></i></td><td><i class="ck"></i></td></tr>
            <tr><td class="l2">暗梁</td><td><i class="ck"></i></td><td><i class="ck"></i></td></tr>
            <tr><td class="l2">墙垛</td><td><i class="ck"></i></td><td><i class="ck"></i></td></tr>
            <tr><td class="l2">幕墙</td><td><i class="ck on"></i></td><td><i class="ck"></i></td></tr>
            <tr><td class="l1"><i class="ex"></i>门窗洞</td><td><i class="ck"></i></td><td><i class="ck"></i></td></tr>
            <tr><td class="l2">门</td><td><i class="ck"></i></td><td><i class="ck"></i></td></tr>
            <tr><td class="l2">窗</td><td><i class="ck"></i></td><td><i class="ck"></i></td></tr>
            <tr><td class="l2">门联窗</td><td><i class="ck"></i></td><td><i class="ck"></i></td></tr>
            <tr><td class="l2">墙洞</td><td><i class="ck"></i></td><td><i class="ck"></i></td></tr>
            <tr><td class="l2">带形窗</td><td><i class="ck"></i></td><td><i class="ck"></i></td></tr>
            <tr><td class="l2">带形洞</td><td><i class="ck"></i></td><td><i class="ck"></i></td></tr>
            <tr><td class="l2">飘窗</td><td><i class="ck"></i></td><td><i class="ck"></i></td></tr>
            <tr><td class="l2"></td><td><i class="ck"></i></td><td><i class="ck"></i></td></tr>
          </tbody>
        </table>
        <i class="v-scroll disp-scroll"></i>
      </div>
      <div class="disp-foot"><button class="reset">恢复默认设置</button></div>
    </aside>
  </main>

  <footer class="status">
    <span class="st s1">层高：<b>3</b></span>
    <span class="st s2">标高：<b>-0.05~2.95</b></span>
    <span class="st s3">选中图元：1(18)</span>
    <span class="st s4">隐藏图元：0</span>
    <div class="sbtns">
      <span class="sbtn"><svg width="16" height="16" viewBox="0 0 16 16"><path class="sd1" d="M2 1v13h12M2 9h5v5"/></svg></span>
      <span class="sbtn wide act"><svg width="16" height="18" viewBox="0 0 16 18"><rect class="sd1" x="1.500" y="2.500" width="13" height="14" rx="2"/><circle class="sb1 bgw" cx="2.500" cy="3" r="2"/></svg><i class="caret"></i></span>
      <span class="sbtn"><svg width="16" height="18" viewBox="0 0 16 18"><path class="sg1" d="M2 1l12 16M14 1L2 17"/></svg></span>
      <span class="sbtn wide"><svg width="16" height="16" viewBox="0 0 16 16"><path class="sd1" d="M1 13L11 2M1 14h14"/><path class="sg1 thick" d="M2 15h12"/></svg><i class="caret"></i></span>
      <span class="sbtn wide"><svg width="18" height="16" viewBox="0 0 18 16"><path class="sd1" d="M3 1v6M0 4h6"/><rect class="fd" x="6" y="9" width="10" height="5"/></svg><i class="caret"></i></span>
      <span class="sbtn"><svg width="15" height="18" viewBox="0 0 15 18"><rect class="fd" x="1" y="1" width="9" height="14" rx="1"/><path class="sd1" d="M12 3v12"/><path class="fd" d="M9 11l6 3-3 1-1 2z"/></svg></span>
      <span class="sbtn"><svg width="16" height="18" viewBox="0 0 16 18"><path class="sg1" d="M2 16C2 8 6 4 14 2"/><circle class="sg1 bgw" cx="2" cy="16" r="1.500"/><circle class="sg1 bgw" cx="14" cy="2" r="1.500"/><path class="fd" d="M9 8l6 4-6 3z"/></svg></span>
    </div>
  </footer>

  <div class="taskbar"><i class="task-btn"></i><span class="clock">16:24</span></div>
</div>

<div class="ask"><span>遇到问题，搜一搜</span><span class="ask-btn">立即尝试</span></div>
<div class="redbox"></div>
<div class="rednote">钢筋定尺长度为10米</div>
</body>
</html>
```
FILE: styles.css
```css
*{box-sizing:border-box}
html,body{margin:0;padding:0;width:1920px;height:1048px;overflow:hidden}
body{font-family:"Noto Sans CJK SC","Liberation Sans",sans-serif;font-size:12px;color:#444;background:#f0f0f0}
button{font:inherit;color:inherit;background:none;border:0;padding:0}
i{font-style:normal;display:inline-block}
b{font-weight:normal}
svg{display:block;flex:none}
.defs{position:absolute;width:0;height:0;overflow:hidden}
.app{display:flex;flex-direction:column;width:1920px;height:1048px}

/* stroke helpers */
.sx{fill:none;stroke:#aaa;stroke-width:1.300}
.sd1{fill:none;stroke:#3f4c5c;stroke-width:1}
.sd2{fill:none;stroke:#444;stroke-width:1.200}
.sd3{fill:none;stroke:#3f4c5c;stroke-width:2}
.sb1{fill:none;stroke:#1b78e2;stroke-width:1.200}
.sb2{fill:none;stroke:#1b78e2;stroke-width:1.800}
.sb3{fill:none;stroke:#1b78e2;stroke-width:2.400}
.sg1{fill:none;stroke:#b5b5b5;stroke-width:1.200}
.sg2{fill:none;stroke:#aaa;stroke-width:1.200}
.sg3{fill:none;stroke:#c4c4c4;stroke-width:2}
.sr{fill:none;stroke:#e23a3a;stroke-width:1.200}
.sw{fill:none;stroke:#fff;stroke-width:1.200}
.fb{fill:#1b78e2}
.fr{fill:#f11}
.fw{fill:#fff}
.fd{fill:#444}
.fbl{fill:#cfe4fb}
.fc{fill:#cfe4fb}
.bgw{fill:#fff}
.av{fill:#bcd8f5}
.dash{stroke-dasharray:3 1.500}
.thick{stroke-width:2.500}
.fx{font:italic 11px "Liberation Serif",serif;fill:#c4c4c4}
.t2d{font:bold 9px "Liberation Sans",sans-serif;fill:#1b78e2}
.caret{width:0;height:0;border:3px solid transparent;border-top:4px solid #777;border-bottom:0}
.caret.lt{border-top-color:#bbb}

/* header */
.head{display:flex;height:41px;background:#fff;flex:none}
.logo{width:50px;position:relative;padding:2px 0 0 7px}
.logo-t{fill:#1e9be8}
.mini-tri{position:absolute;left:37px;top:31px;border:2px solid #666;border-top-color:transparent;border-left-color:transparent}
.head-main{flex:1;display:flex;flex-direction:column}
.titlebar{display:flex;height:22px;align-items:center}
.qa{display:flex;width:710px;height:22px;align-items:center}
.q{width:26px;height:20px;display:flex;align-items:center;justify-content:center;flex:none}
.q.undo{width:37px;justify-content:flex-start;padding-left:5px;gap:5px}
.q.redo{width:33px;justify-content:flex-start;padding-left:5px;gap:5px}
.q-on{background:#c6dcf3;width:23px;margin:0 1.500px}
.q-c{flex-direction:column;gap:1px;width:14px;margin-left:2px}
.bar{width:6px;height:1px;background:#666}
.title{flex:1;color:#444;white-space:nowrap;letter-spacing:.14px}
.win{display:flex;align-items:center;width:110px;gap:28px;margin-right:4px;padding-left:19px}
.win svg:last-child{margin-left:-2px}
.w-min{width:8px;height:2px;background:#555;margin-top:6px}
.tabrow{display:flex;align-items:center;height:19px}
.tabs{display:flex;width:1375px;height:19px}
.tab{padding:0 13px;line-height:19px;white-space:nowrap;color:#444}
.tab-on{background:#1e90ff;color:#fff;border-radius:10px}
.searchbox{width:319px;height:18px;border:1px solid #ddd;background:#fff;border-radius:2px;display:flex;align-items:center;overflow:hidden;padding-right:8px;gap:6px}
.q-wrap{flex:1;display:flex;justify-content:flex-end;overflow:hidden;min-width:0}
.q-text{flex:none;white-space:nowrap;color:#333;line-height:16px}
.user{display:flex;align-items:center;width:81px;margin-left:6px;height:19px;gap:0}
.help{display:flex;align-items:center;gap:6px;margin-left:0;height:19px}
.qm{font-size:15px;color:#444;line-height:15px}

/* search bubble */
.ask{position:absolute;left:1218px;top:13px;width:196px;height:34px;background:#0090ff;border-radius:5px;color:#fff;display:flex;align-items:center;padding-left:7px;white-space:nowrap}
.ask::after{content:"";position:absolute;right:-6px;top:11px;border:6px solid transparent;border-left:6px solid #0090ff;border-right:0}
.ask-btn{position:absolute;left:122px;top:11px;width:60px;height:14px;line-height:14px;text-align:center;background:#2ea3ff;border-radius:2px}

/* ribbon */
.ribbon{display:flex;height:98px;background:#fff;border-top:1px solid #e4e4e4;border-bottom:1px solid #d8d8d8;flex:none}
.grp{display:flex;flex-direction:column;height:96px;margin-top:1px;border-right:1px solid #e2e2e2;flex:none}
.grp-body{display:flex;height:74px;padding-top:3px}
.grp-name{text-align:center;height:20px;line-height:20px;color:#444}
.btns{padding-left:10px;gap:10px}
.g1{width:233px}.g2{width:198px}.g3{width:152px}.g4{width:198px}.g5{width:281px}
.g6{width:82px}.g7{width:70px}.g8{width:58px}.g9{width:78px}
.big{display:flex;flex-direction:column;align-items:center;height:67px;white-space:nowrap;flex:none}
.big svg{height:32px}
.big span{line-height:20px;margin-top:3px}
.big-sel{width:40px;margin-left:8px;padding-top:0}
.big-on{margin:0 -4px;padding:0 4px}
.on{background:#c6dcf3;border-radius:4px}
.btns.off .big{color:#b5b5b5}
.col-small{display:flex;flex-direction:column;flex:none;margin-top:-2px}
.c1{width:98px;margin-left:6px}
.sm{display:flex;align-items:center;height:22px;gap:4px;white-space:nowrap}
.sm:nth-child(3){margin-top:2px}
.sm .caret{margin-left:4px}

/* combos */
.combos{display:flex;gap:3px;height:27px;padding:3px 0 0 3px;flex:none}
.combo{width:99px;height:21px;background:#fff;border:1px solid #e2e2e2;border-radius:3px;padding-left:2px;line-height:19px;position:relative;color:#444}
.combo .caret{position:absolute;right:5px;top:8px}

/* main */
.main{display:flex;height:842px;padding-left:1px;flex:none}
.panel{background:#fff;position:relative;border:1px solid #dadada;overflow:hidden}
.p-head{height:11px;background:#e5e5e5;position:relative}
.p-x{position:absolute;right:4px;top:1px;width:8px;height:8px}
.p-title{height:22px;line-height:21px;background:#f2f2f2;border-bottom:1px solid #ddd;padding-left:8px;color:#888}
.v-scroll{position:absolute;width:8px;background:#c8c8c8;border-radius:4px}

/* nav */
.nav{width:129px;height:842px;margin-right:4px}
.nav-tools{display:flex;height:28px;align-items:center;border-bottom:1px solid #ddd;padding-left:7px}
.spark{margin-right:8px}
.nt{width:24px;height:22px;display:flex;align-items:center;justify-content:center;margin-right:4px}
.nav-list{padding-top:4px;width:114px}
.cat{height:25px;line-height:25px;background:#eeeeee;margin-bottom:3px;padding-left:3px;color:#333;position:relative;white-space:nowrap}
.it{height:25px;margin-bottom:3px;display:flex;align-items:center;padding-left:17px;color:#444;white-space:nowrap}
.it svg{width:20px;height:20px;margin-right:12px;flex:none}
.it-on{background:#cfe4ff}
.dot{position:absolute;width:6px;height:6px;border-radius:50%;background:#f00;top:2px;margin-left:1px}
.cat-try{display:flex;align-items:center;gap:2px;overflow:hidden}
.free{flex:none;height:21px;line-height:21px;font-size:11px;padding-left:6px;width:50px;margin-left:1px;border-radius:10px 0 0 10px;background:#f0c074;color:#7a4c10}
.nav-scroll{left:117px;top:110px;height:451px}

/* mid col */
.col-mid{display:flex;flex-direction:column;width:280px;gap:4px;flex:none}
.comp{height:398px}
.props{height:440px}
.p-tabs{display:flex;height:23px;background:#f2f2f2;border-bottom:1px solid #ddd}
.pt{width:65px;line-height:22px;text-align:center;background:#d9d9d9;color:#999;border-right:1px solid #ccc}
.pt-on{background:#f2f2f2;color:#333;font-weight:700}
.comp-tools{display:flex;height:28px;align-items:center;padding-left:4px;border-bottom:1px solid #e2e2e2;position:relative}
.ct{display:flex;align-items:center;gap:5px;margin-right:12px;white-space:nowrap}
.ct svg{width:15px;height:15px}
.ct .caret{margin-left:2px}
.more{position:absolute;right:1px;top:4px;width:10px;height:19px;font-size:7px;line-height:19px;border:1px solid #eee;border-radius:2px;color:#555;text-align:center}
.comp-search{height:19px;display:flex;align-items:center;justify-content:space-between;padding:0 8px 0 2px;color:#bbb;border-bottom:1px solid #e2e2e2}
.tree{padding-top:2px}
.tr{height:24px;display:flex;align-items:center;white-space:nowrap;color:#444}
.t1{padding-left:13px}
.t2{padding-left:33px}
.t3{padding-left:60px}
.tri{width:0;height:0;border:3.500px solid transparent;border-top:4px solid #777;border-bottom:0;margin-right:3px}
.leaf{background:#c6dcf3;border-radius:3px;height:21px;line-height:21px;width:69px;padding-left:3px;font-size:12px}
.prop-body{position:relative;height:404px;overflow:hidden}
.ptable{border-collapse:separate;border-spacing:0;table-layout:fixed;width:261px}
.pc1{width:21px}.pc2{width:101px}.pc3{width:139px}
.ptable th,.ptable td{height:21px;padding:0;border-right:1px solid #ddd;border-bottom:1px solid #ddd;font-weight:normal;white-space:nowrap}
.ptable thead th{background:#fff;height:20px;color:#444}
.ptable tbody th{background:#f0f0f0;color:#555}
.ptable td{padding-left:3px;color:#444;line-height:20px}
.ptable td.lnk{color:#1a62d6}
.rb{font-size:10px;position:relative;top:-2px}
.prop-scroll{left:267px;top:13px;height:243px}

/* gutters */
.gutter{width:4px;display:flex;flex:none;padding-top:143px}
.handle-v{width:4px;height:100px;background:#68707c}
.col-view{display:flex;flex-direction:column;width:1218px;flex:none}

/* canvas */
.canvas{height:385px;background:#000;position:relative;overflow:hidden;flex:none}
.cad{display:block}
.c-fill{fill:#666}
.c-dim{fill:none;stroke:#0f6d18;stroke-width:1}
.c-beam{fill:none;stroke:#2bdc2b;stroke-width:5}
.c-node{fill:none;stroke:#9400f0;stroke-width:6;stroke-dasharray:6 45.250}
.c-sel{fill:#0f6cf2}
.c-node2{fill:none;stroke:#6a10b0;stroke-width:2}
.c-tri{fill:#ffe600;stroke:#a000c8;stroke-width:.5}
.c-grip{fill:#00ee00}
.c-tick{fill:none;stroke:#d8d8d8;stroke-width:.8}
.c-txt text{fill:#fff;font-family:"Liberation Sans",sans-serif;text-anchor:middle}
.c-ax text{font-size:19px}
.dim{font-size:20px}
.y-ax{stroke:#00d800;stroke-width:3.500;fill:none}
.y-tip{fill:#00d800}
.x-ax{stroke:#f01010;stroke-width:3.500;fill:none}
.x-tip{fill:#f01010}
.o-dot{fill:#1010c0}
.t-y{fill:#0c9a0c;font:15px "Liberation Sans",sans-serif;text-anchor:middle}
.t-x{fill:#f01010;font:18px "Liberation Sans",sans-serif;text-anchor:middle}
.c-under{fill:none;stroke:#14a024;stroke-width:1}
.band{position:absolute;left:0;right:0;bottom:0;height:27px;background:rgba(48,48,48,.88)}
.band-nums{position:absolute;left:0;top:0;height:27px}
.band-nums span{position:absolute;top:2px;font:18px/24px "Liberation Sans",sans-serif;color:#777;transform:translateX(-50%)}
.band-nums span:nth-child(1){left:357px}
.band-nums span:nth-child(2){left:408px}
.band-nums span:nth-child(3){left:459px}
.band-nums span:nth-child(4){left:510px}
.band-nums span:nth-child(5){left:562px}
.band-nums span:nth-child(6){left:613px}
.band-nums span:nth-child(7){left:664px}
.band-nums span:nth-child(8){left:715px}
.band-nums span:nth-child(9){left:766px}
.band-nums .band-sum{left:562px;top:-5px;color:#555}
.band-ic{position:absolute;left:479px;top:6px}
.band-text{position:absolute;left:499px;top:0;line-height:28px;color:#fff;font-weight:700;white-space:nowrap}
.tip{position:absolute;left:468px;top:324px;width:278px;height:29px;background:#0090ff;border-radius:4px;color:#fff;display:flex;align-items:center;padding-left:7px;white-space:nowrap}
.tip::after{content:"";position:absolute;left:14px;bottom:-5px;border:5px solid transparent;border-top:5px solid #0090ff;border-bottom:0}
.tip-no{color:#9ed3ff;margin-left:auto;margin-right:20px}
.floatbar{position:absolute;right:0;top:0;width:33px;height:246px;background:#fff;border-radius:0 0 2px 2px;display:flex;flex-direction:column;align-items:center;padding-top:12px}
.floatbar>*{margin-bottom:8px}
.floatbar>:nth-child(1){margin-bottom:9px}
.floatbar>:nth-child(6){margin-bottom:6px}
.floatbar .caret{border-width:4px;border-top-width:4px;border-bottom:0}
.floatbar .fb-sep{width:22px;height:1px;background:#888;margin-bottom:6px}
.gutter-h{height:5px;display:flex;justify-content:center;background:#f0f0f0;flex:none}
.handle-h{width:100px;height:5px;background:#68707c}

/* edit */
.edit{height:452px;flex:none}
.edit .p-head{height:9px}
.edit .p-x{top:0}
.edit-title{height:23px;line-height:22px;padding-left:9px;color:#888}
.tools{height:27px;display:flex;align-items:center;gap:12px;padding-left:6px;white-space:nowrap;position:relative}
.nv{width:20px;height:16px}
.nv2{width:16px;height:16px}
.ti{display:flex;align-items:center;gap:5px}
.ti-o{gap:5px}
.ti-total{position:absolute;left:587px;top:4px;line-height:20px}
.grid-wrap{position:relative;height:378px;overflow:hidden;border-top:1px solid #ddd}
.rtable{border-collapse:separate;border-spacing:0;table-layout:fixed;width:1202px}
.r0{width:14px}.r1{width:73px}.r2{width:55px}.r3{width:36px}.r4{width:33px}.r5{width:217px}.r6{width:165px}.r7{width:217px}.r8{width:37px}.r9{width:40px}.r10{width:48px}.r11{width:62px}.r12{width:61px}.r13{width:71px}.r14{width:73px}
.rtable th,.rtable td{font-weight:normal;padding:0;white-space:nowrap;overflow:hidden;border-right:1px solid #d9e3e5;border-bottom:1px solid #d9e3e5}
.rtable thead th{height:20px;background:#fff;color:#444;border-color:#e2e2e2}
.rtable tbody th{height:46px;background:#f0f0f0;color:#555;text-align:center}
.rtable td{height:46px;background:#c1dde0;padding-left:3px;line-height:14px;color:#222}
.rtable thead .hsel{background:#7cb8f8;color:#fff;font-weight:700;border-color:#5da4f0}
.rtable tbody .rsel{background:#7cb8f8;color:#fff;font-weight:700}
.rtable td.cell-sel{box-shadow:inset 0 0 0 2px #808080;background:#c1dde0}
.rtable td.m{font-family:"Noto Sans Mono CJK SC","Liberation Mono",monospace;font-size:12px;color:#222}
.rtable td.cn{font-size:12px}
.rtable td.ctr{padding-left:6px}
.rb2{font-size:10px;color:#222}
.rtable td.sh{padding:0;vertical-align:top}
.shape{width:216px;height:45px;display:block}
.tm{font:13px "Noto Sans Mono CJK SC","Liberation Mono",monospace;fill:#222;text-anchor:middle}
.tr-m{font:13px "Noto Sans Mono CJK SC","Liberation Mono",monospace;fill:#f01010;text-anchor:middle}
.bar-s{fill:none;stroke:#000;stroke-width:2}
.t460{font:20px "Liberation Serif",serif;fill:#111;text-anchor:middle}
.t260{font:20px "Liberation Serif",serif;fill:#f01010}
.hoop{fill:none;stroke:#000;stroke-width:2.200}
.edit-scroll{left:1205px;top:15px;height:252px}
.hscroll{height:10px;position:relative;margin-top:1px}
.h-thumb{position:absolute;left:15px;top:2px;height:7px;width:880px;background:#c8c8c8;border-radius:4px}
.tri-l{position:absolute;left:5px;top:1px;border:4px solid transparent;border-right:4px solid #555;border-left:0}
.tri-r{position:absolute;left:1194px;top:1px;border:4px solid transparent;border-left:4px solid #555;border-right:0}

/* display settings */
.disp{width:280px;height:842px;flex:none}
.disp-tabs{height:30px;display:flex;gap:4px;padding:4px 0 0 3px}
.dt{width:60px;height:25px;line-height:24px;text-align:center;background:#e2e2e2;color:#777;border-radius:4px 4px 0 0}
.dt-on{background:#fff;color:#2f80e8;border:1px solid #ddd;border-bottom:0}
.disp-box{margin-left:2px;width:274px;height:740px;border:1px solid #ddd;overflow:hidden;position:relative}
.dtable{border-collapse:separate;border-spacing:0;table-layout:fixed;width:258px}
.d1{width:132px}.d2{width:63px}.d3{width:63px}
.dtable th,.dtable td{height:21px;padding:0;font-weight:normal;border-right:1px solid #ddd;border-bottom:1px solid #ddd;position:relative;color:#444;white-space:nowrap}
.dtable th{height:20px}
.l0{padding-left:21px!important}
.l1{padding-left:31px!important}
.l2{padding-left:41px!important}
.ex{position:absolute;top:4px;width:13px;height:13px;border:1px solid #888;border-radius:2px;background:#fff}
.ex::before{content:"";position:absolute;left:3px;top:5px;width:5px;height:1px;background:#555}
.l0 .ex{left:2px}
.l1 .ex{left:12px}
.l1::before{content:"";position:absolute;left:8px;top:10px;width:4px;height:1px;background:#ddd}
.l2::before{content:"";position:absolute;left:18px;top:0;bottom:0;border-left:1px solid #e2e2e2}
.l2::after{content:"";position:absolute;left:18px;top:10px;width:16px;border-top:1px solid #e2e2e2}
.ck{display:block;width:14px;height:14px;margin:0 auto;border:1px solid #888;border-radius:2px;background:#fff;position:relative}
.ck.on{background:#2d7fe6;border-color:#2d7fe6}
.ck.on::after{content:"";position:absolute;left:4px;top:1px;width:5px;height:8px;border:solid #fff;border-width:0 2px 2px 0;transform:rotate(40deg)}
.ck.in::after{content:"";position:absolute;inset:1px;background:#8cc0fa}
.ck.dis{background:#eee;border-color:#ccc}
.disp-scroll{left:262px;top:14px;height:197px}
.disp-foot{display:flex;justify-content:flex-end;padding:7px 7px 0 0}
.reset{width:89px;height:25px;border:1px solid #ccc;border-radius:3px;background:#fff;color:#444}

/* status */
.status{display:flex;height:32px;align-items:center;background:#f9f9f9;flex:none;padding-left:2px;white-space:nowrap}
.st{flex:none;color:#444}
.st b{margin-left:5px}
.s1{width:90px}
.s2{width:140px}
.s3{width:110px}
.s4{width:108px}
.sbtns{display:flex;gap:4px}
.sbtn{width:25px;height:24px;border:1px solid #aaa;border-radius:3px;background:#fff;display:flex;align-items:center;justify-content:center;gap:2px}
.sbtn.wide{width:35px}
.sbtn.act{background:#d3e5fb;border-color:#5a9ee8}

/* taskbar */
.taskbar{height:8px;background:#1f2b3e;display:flex;overflow:hidden;position:relative;flex:none}
.task-btn{width:45px;height:8px;background:#4a5563;margin-left:393px}
.clock{position:absolute;left:1817px;top:3px;color:#fff;line-height:14px}

/* annotations */
.redbox{position:absolute;left:407px;top:609px;width:1209px;height:125px;border:3px solid #fb3a3a;pointer-events:none}
.rednote{position:absolute;left:976px;top:823px;font-size:27.400px;line-height:40px;color:#f74242;white-space:nowrap}
```
